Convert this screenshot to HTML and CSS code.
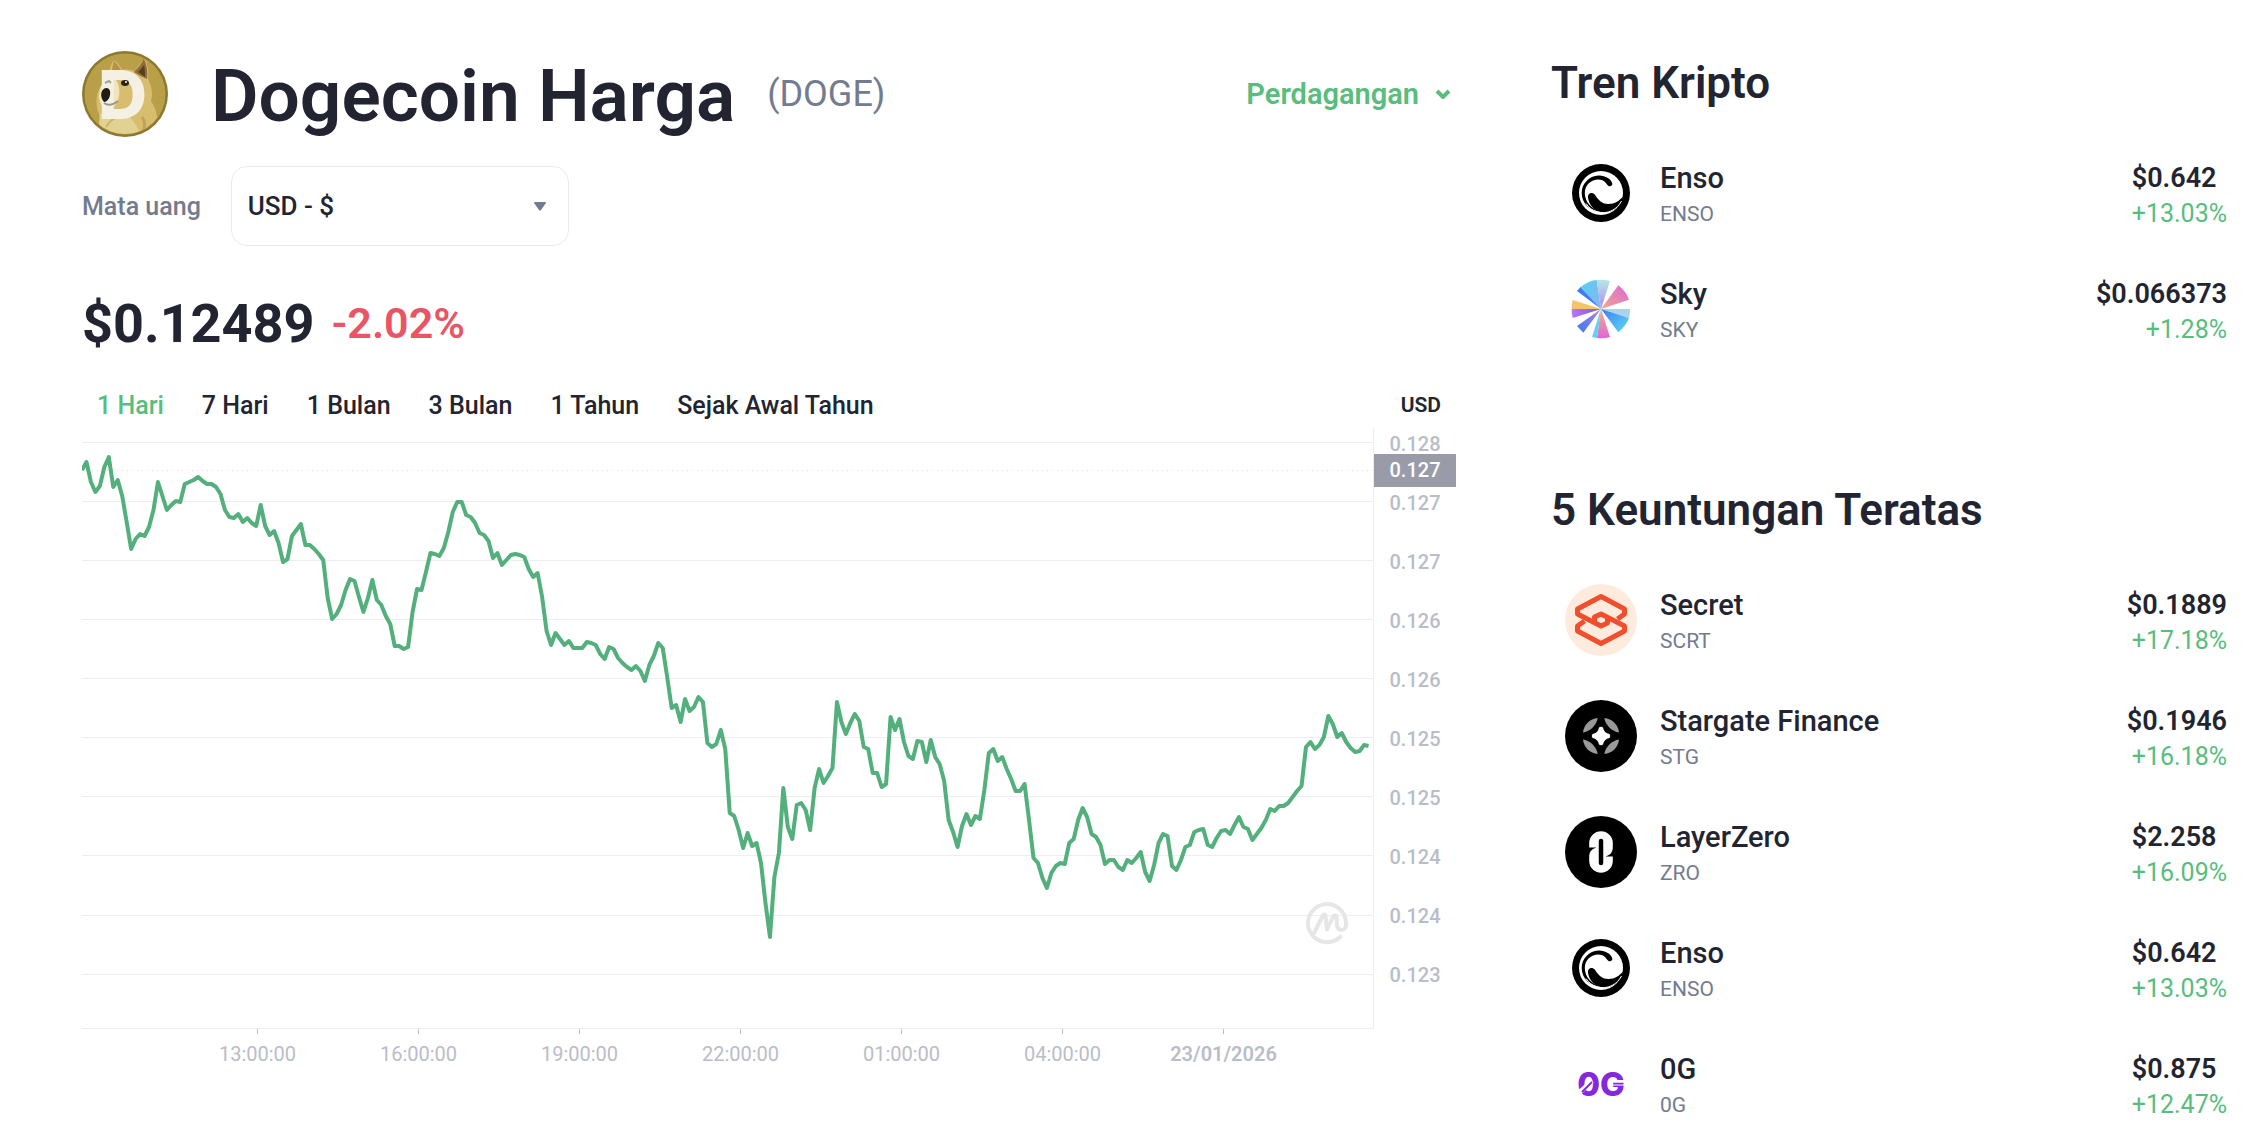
FILE: index.html
```html
<!DOCTYPE html>
<html lang="id">

<head>
  <meta charset="UTF-8" />
  <meta name="viewport" content="width=device-width, initial-scale=1" />
  <title>Dogecoin Harga (DOGE)</title>
  <link rel="stylesheet" href="styles.css">
</head>

<body>
  <!-- shared gradients and the Enso mark, used twice -->
  <svg class="defs" aria-hidden="true">
    <defs>
      <linearGradient id="skyPale" x1="0" y1="0" x2="0" y2="1">
        <stop offset="0" stop-color="#b9e6e6" />
        <stop offset="1" stop-color="#a98bf0" />
      </linearGradient>
      <linearGradient id="skyCyan" x1="0" y1="0" x2="1" y2="1">
        <stop offset="0" stop-color="#53d3f3" />
        <stop offset="1" stop-color="#8fb0f5" />
      </linearGradient>
      <linearGradient id="skyPink" x1="1" y1="0" x2="0" y2="1">
        <stop offset="0" stop-color="#dd66d8" />
        <stop offset="1" stop-color="#f0a98c" />
      </linearGradient>
      <linearGradient id="skyRose" x1="0" y1="1" x2="0" y2="0">
        <stop offset="0" stop-color="#dd66d8" />
        <stop offset="1" stop-color="#f3b183" />
      </linearGradient>
      <linearGradient id="skyBlue" x1="0" y1="0" x2="1" y2="1">
        <stop offset="0" stop-color="#3f7cf0" />
        <stop offset="1" stop-color="#5cdcf5" />
      </linearGradient>
      <linearGradient id="skyPurple" x1="0" y1="0" x2="1" y2="0">
        <stop offset="0" stop-color="#b878f0" />
        <stop offset="1" stop-color="#8055e0" />
      </linearGradient>
      <linearGradient id="skyDeep" x1="0" y1="1" x2="1" y2="0">
        <stop offset="0" stop-color="#3a7bf2" />
        <stop offset="1" stop-color="#b07fe8" />
      </linearGradient>
      <clipPath id="dogeClip">
        <circle cx="43" cy="43" r="40" />
      </clipPath>
    </defs>
    <symbol id="enso" viewBox="0 0 72 72">
      <circle cx="36" cy="36" r="29" />
      <circle cx="36" cy="36" r="22" fill="#fff" />
      <path d="M47.3 26.5C46.5 22 40 18.2 33.5 18.5 24 19 16.7 26.5 16.7 36c0 10.500 8.300 18.500 19.300 18.500C27 53 19.800 45 19.800 36c0-8 6.200-13.600 13.700-13.600 4.500 0 7.500 3.100 9 5.600 1.500 2.200 5.200 1.200 4.800-1.500z" />
      <path d="M23 40.500c-.6-4.200 4-6.200 6.700-3C33 42 36 47 43.500 47c6.500 0 11-3.500 14.500-7.500C57 50 47.500 56 38 55.500 29 54.500 23.800 47.500 23 40.500z" />
      <path d="M21 46.500C26 54.500 37 58.500 47 53.500c4-2 7.500-5.500 9.500-9.500" fill="none" stroke="#fff" stroke-width="1" />
    </symbol>
  </svg>

  <div class="page">
    <main class="coin">
      <header class="coin-header">
        <svg class="coin-logo" viewBox="0 0 86 86" role="img" aria-label="Dogecoin">
          <circle cx="43" cy="43" r="43" fill="#8c7930" />
          <circle cx="43" cy="43" r="40.500" fill="#b9a048" />
          <g clip-path="url(#dogeClip)">
            <path d="M16 80c2-6 3-11 1-17-4-9-3-21 2-28 3-5 6-8 8-12 1-6 2-11 5-14 4 3 7 7 8 10 5-1 9 0 13 1 3-5 7-10 10-12 3 6 4 13 3 20 4 8 5 16 3 22 6 9 8 20 5 30z" fill="#d8bd6e" />
            <path d="M17 47c0-9 3-15 8-20 5-3 9 1 11 6 3 9 1 18-5 24-6 4-12 0-14-10z" fill="#f0e3bd" />
            <path d="M52 21c4-4 7-8 10-13 3 6 4 13 3 20-4-2-9-4-13-7z" fill="#8f6d3a" />
            <path d="M56 21c2-2 4-4 6-7 1 4 1 8 1 12z" fill="#54411f" />
            <path d="M30 21c0-4 1-8 2-11 3 3 5 6 7 9z" fill="#b98f4a" />
            <path d="M18 62c8 6 20 8 30 4 6 8 12 15 8 20H16z" fill="#e2d292" />
            <path d="M60 66c4 5 3 11 0 17" fill="none" stroke="#bfa55a" stroke-width="3" />
            <path d="M24 76c3-5 8-9 12-10" fill="none" stroke="#cbb368" stroke-width="2" />
          </g>
          <text class="doge-letter" x="16" y="68">D</text>
          <path d="M20 40c2-4 7-4 8 0 1 5-2 11-6 11-2-2-4-7-2-11z" fill="#211b16" />
          <path d="M22 52c4 3 9 2 14-2" fill="none" stroke="#9b948c" stroke-width="2" />
          <ellipse cx="43" cy="32" rx="4" ry="3" fill="#2b2216" />
          <circle cx="44" cy="31" r="1" fill="#fff" />
          <path d="M23 32l4-2 2 2" fill="none" stroke="#aaa49c" stroke-width="2" />
        </svg>
        <h1>Dogecoin Harga</h1>
        <span class="symbol">(DOGE)</span>
        <button type="button" class="trade">
          Perdagangan
          <svg class="chevron" viewBox="0 0 16 10" aria-hidden="true">
            <path d="M2 2l6 6 6-6" />
          </svg>
        </button>
      </header>

      <div class="currency">
        <label for="currency">Mata uang</label>
        <select id="currency">
          <option>USD - $</option>
        </select>
      </div>

      <div class="quote">
        <strong class="quote-price">$0.12489</strong>
        <span class="quote-change">-2.02%</span>
      </div>

      <div class="ranges">
        <button type="button" class="range active">1 Hari</button>
        <button type="button" class="range">7 Hari</button>
        <button type="button" class="range">1 Bulan</button>
        <button type="button" class="range">3 Bulan</button>
        <button type="button" class="range">1 Tahun</button>
        <button type="button" class="range">Sejak Awal Tahun</button>
        <span class="unit">USD</span>
      </div>

      <div class="chart">
        <div class="plot">
          <!-- one x unit per five minutes -->
          <svg class="plot-svg" viewBox="0 0 289 600" preserveAspectRatio="none" role="img" aria-label="Grafik harga DOGE 1 hari">
            <path class="grid" d="M0 14.500H289M0 73.500H289M0 132.500H289M0 191.500H289M0 250.500H289M0 309.500H289M0 368.500H289M0 427.500H289M0 487.500H289M0 546.500H289" />
            <path class="open-line" d="M0 42.500H289" />
            <polyline class="price-line" points="0,42 1,34 2,54 3,64 4,58 5,39 6,29 7,59 8,52 9,68 10,94 11,121 12,111 13,106 14,108 15,99 16,82 17,54 18,68 19,82 20,77 21,73 22,74 23,56 24,54 25,52 26,49 27,53 28,56 29,56 30,59 31,66 32,82 33,89 34,90 35,86 36,94 37,90 38,95 39,98 40,77 41,98 42,107 43,103 44,115 45,134 46,131 47,108 48,102 49,96 50,117 51,117 52,121 53,126 54,132 55,170 56,191 57,186 58,177 59,162 60,151 61,153 62,169 63,184 64,170 65,152 66,172 67,177 68,188 69,196 70,218 71,218 72,221 73,219 74,184 75,161 76,162 77,144 78,125 79,126 80,128 81,120 82,104 83,84 84,74 85,74 86,87 87,89 88,95 89,105 90,107 91,113 92,130 93,125 94,137 95,132 96,127 97,126 98,127 99,129 100,141 101,149 102,145 103,169 104,203 105,217 106,205 107,211 108,217 109,213 110,220 111,220 112,220 113,214 114,215 115,217 116,226 117,231 118,219 119,221 120,230 121,235 122,239 123,242 124,238 125,243 126,253 127,237 128,228 129,215 130,220 131,249 132,280 133,277 134,294 135,271 136,283 137,279 138,269 139,274 140,315 141,319 142,316 143,302 144,321 145,385 146,388 147,402 148,420 149,405 150,418 151,415 152,435 153,475 154,509 155,449 156,425 157,360 158,399 159,411 160,377 161,375 162,382 163,402 164,360 165,341 166,355 167,348 168,340 169,274 170,294 171,306 172,295 173,286 174,293 175,319 176,321 177,345 178,345 179,359 180,356 181,289 182,302 183,291 184,314 185,328 186,331 187,313 188,314 189,334 190,312 191,329 192,336 193,353 194,392 195,404 196,419 197,398 198,386 199,397 200,388 201,391 202,362 203,325 204,321 205,333 206,329 207,341 208,351 209,363 210,363 211,356 212,392 213,430 214,435 215,450 216,460 217,445 218,438 219,435 220,436 221,415 222,411 223,392 224,380 225,389 226,406 227,409 228,417 229,436 230,432 231,432 232,439 233,442 234,432 235,435 236,430 237,424 238,444 239,453 240,437 241,415 242,406 243,408 244,438 245,442 246,432 247,419 248,417 249,404 250,402 251,401 252,417 253,419 254,410 255,403 256,402 257,406 258,397 259,389 260,399 261,401 262,412 263,406 264,400 265,392 266,381 267,383 268,378 269,378 270,375 271,369 272,363 273,358 274,319 275,314 276,321 277,317 278,309 279,288 280,296 281,309 282,305 283,314 284,320 285,324 286,323 287,317 288,318" />
          </svg>
          <svg class="watermark" viewBox="0 0 42 42" aria-hidden="true">
            <path d="M34.500 34.500A19 19 0 1 1 40 21v2c0 6.500-8.500 6.500-9 .5l-.5-8c-.3-3.200-2.200-2.800-3.500-.5L21 27.500 19.500 14c-.3-2-1.800-2-2.700-.3L7.500 32" />
          </svg>
        </div>
        <div class="y-axis">
          <span>0.128</span>
          <span>0.127</span>
          <span>0.127</span>
          <span>0.126</span>
          <span>0.126</span>
          <span>0.125</span>
          <span>0.125</span>
          <span>0.124</span>
          <span>0.124</span>
          <span>0.123</span>
          <span class="open-flag">0.127</span>
        </div>
        <div class="x-axis">
          <span>13:00:00</span>
          <span>16:00:00</span>
          <span>19:00:00</span>
          <span>22:00:00</span>
          <span>01:00:00</span>
          <span>04:00:00</span>
          <span class="date">23/01/2026</span>
        </div>
      </div>
    </main>

    <aside class="lists">
      <section>
        <h2>Tren Kripto</h2>
        <ul class="coins">
          <li>
            <a class="coin-row" href="#enso">
              <svg class="coin-icon" aria-hidden="true"><use href="#enso" /></svg>
              <span class="coin-name"><b>Enso</b><small>ENSO</small></span>
              <span class="coin-price"><b>$0.642</b><small>+13.03%</small></span>
            </a>
          </li>
          <li>
            <a class="coin-row" href="#sky">
              <svg class="coin-icon" viewBox="0 0 72 72" aria-hidden="true">
                <path d="M36 36L12 18l4-4.500z" fill="#3f7cf0" />
                <path d="M36 36L15.500 14.500Q22 8 31.700 7z" fill="url(#skyCyan)" />
                <path d="M36 36L31.700 7Q38 6 45 8z" fill="url(#skyPale)" />
                <path d="M36 36L53.300 12.300Q61 18 64 26.700z" fill="url(#skyPink)" />
                <path d="M36 36H65Q65 41 64 45z" fill="#a9d5ea" />
                <path d="M36 36L64 45Q61 53 53.300 59.300z" fill="url(#skyBlue)" />
                <path d="M36 36L45 64Q39 66 32 65z" fill="url(#skyRose)" />
                <path d="M36 36L32 65 27 64z" fill="#62d0f0" />
                <path d="M36 36L18.300 59.700 12 53z" fill="url(#skyDeep)" />
                <path d="M36 36L7.700 45Q6.500 40 6.700 36z" fill="url(#skyPurple)" />
                <path d="M36 36H6.700Q6.500 31 7.700 27z" fill="#f5c468" />
              </svg>
              <span class="coin-name"><b>Sky</b><small>SKY</small></span>
              <span class="coin-price"><b>$0.066373</b><small>+1.28%</small></span>
            </a>
          </li>
        </ul>
      </section>

      <section>
        <h2>5 Keuntungan Teratas</h2>
        <ul class="coins">
          <li>
            <a class="coin-row" href="#secret">
              <svg class="coin-icon" viewBox="0 0 72 72" aria-hidden="true">
                <circle cx="36" cy="36" r="36" fill="#fdecdd" />
                <g fill="none" stroke="#f04e2c" stroke-width="5" stroke-linejoin="round">
                  <path d="M52.500 35L59.500 30V25L36 12.500 12.500 25V30L36 42l6.500-3V35" />
                  <path d="M19.500 37L12.500 42V47L36 59.500 59.500 47V42L36 30l-6.500 3V37" />
                </g>
              </svg>
              <span class="coin-name"><b>Secret</b><small>SCRT</small></span>
              <span class="coin-price"><b>$0.1889</b><small>+17.18%</small></span>
            </a>
          </li>
          <li>
            <a class="coin-row" href="#stargate">
              <svg class="coin-icon" viewBox="0 0 72 72" aria-hidden="true">
                <circle cx="36" cy="36" r="36" />
                <g fill="#999">
                  <path d="M32.700 18C25 18.500 18.500 25 18 32.500 25 31.500 31.500 25.500 32.700 18z" />
                  <path d="M39.300 18C47 18.500 53.500 25 54 32.500 47 31.500 40.500 25.500 39.300 18z" />
                  <path d="M32.700 54C25 53.500 18.500 47 18 39.500 25 40.500 31.500 46.500 32.700 54z" />
                  <path d="M39.300 54C47 53.500 53.500 47 54 39.500 47 40.500 40.500 46.500 39.300 54z" />
                </g>
                <path d="M34 27.500q2-1.500 4 0 1 5.500 6.500 6.500 1.500 2 0 4-5.500 1-6.500 6.500-2 1.500-4 0-1-5.500-6.500-6.500-1.500-2 0-4 5.500-1 6.500-6.500z" fill="#fff" />
              </svg>
              <span class="coin-name"><b>Stargate Finance</b><small>STG</small></span>
              <span class="coin-price"><b>$0.1946</b><small>+16.18%</small></span>
            </a>
          </li>
          <li>
            <a class="coin-row" href="#layerzero">
              <svg class="coin-icon" viewBox="0 0 72 72" aria-hidden="true">
                <circle cx="36" cy="36" r="36" />
                <g fill="#fff">
                  <path d="M24.200 31.500V27a11.800 11.800 0 0 1 23.600 0v4c0 5.500-3 8.500-7.500 9.500H31v-9z" />
                  <path d="M47.800 40.500V45a11.800 11.800 0 0 1-23.600 0v-4c0-5.500 3-8.500 7.500-9.500H41v9z" />
                </g>
                <path d="M36 25v22" fill="none" stroke="#000" stroke-width="4.500" stroke-linecap="round" />
              </svg>
              <span class="coin-name"><b>LayerZero</b><small>ZRO</small></span>
              <span class="coin-price"><b>$2.258</b><small>+16.09%</small></span>
            </a>
          </li>
          <li>
            <a class="coin-row" href="#enso">
              <svg class="coin-icon" aria-hidden="true"><use href="#enso" /></svg>
              <span class="coin-name"><b>Enso</b><small>ENSO</small></span>
              <span class="coin-price"><b>$0.642</b><small>+13.03%</small></span>
            </a>
          </li>
          <li>
            <a class="coin-row" href="#0g">
              <svg class="coin-icon" viewBox="0 0 72 72" aria-hidden="true">
                <text class="zero-g" x="36" y="48">0G</text>
                <path d="M14 45L27 33" fill="none" stroke="#fff" stroke-width="5" />
                <path d="M17 44L27 34" fill="none" stroke="#8528dc" stroke-width="2" />
                <path d="M45 37H60" fill="none" stroke="#fff" stroke-width="1" />
              </svg>
              <span class="coin-name"><b>0G</b><small>0G</small></span>
              <span class="coin-price"><b>$0.875</b><small>+12.47%</small></span>
            </a>
          </li>
        </ul>
      </section>
    </aside>
  </div>
</body>

</html>
```
FILE: styles.css
```css
:root {
  --text: #222531;
  --muted: #737b8e;
  --axis: #b9bdc8;
  --line: #eceef0;
  --green: #58bd7d;
  --red: #e95565;
}

* {
  margin: 0;
  padding: 0;
  box-sizing: border-box;
}

body {
  background: #fff;
  color: var(--text);
  font-family: Roboto, sans-serif;
}

button,
select {
  font: inherit;
  color: inherit;
  background: none;
  border: none;
  cursor: pointer;
}

.defs {
  position: absolute;
  width: 0;
  height: 0;
}

.page {
  display: grid;
  grid-template-columns: 1374fr 676fr;
  gap: 95px;
  padding: 51px 19px 0 82px;
}

/* Header */
.coin-header {
  display: flex;
  align-items: center;
  height: 86px;
}

.coin-logo {
  width: 86px;
  height: 86px;
  margin-right: 43px;
}

.doge-letter {
  font-family: Inter, sans-serif;
  font-size: 68px;
  font-weight: 800;
  fill: #f5f0e4;
}

h1 {
  padding-top: 4px;
  font-size: 73px;
  font-weight: 600;
  line-height: 86px;
}

.symbol {
  margin-left: 32px;
  font-size: 36px;
  color: var(--muted);
}

.trade {
  display: flex;
  align-items: center;
  gap: 16px;
  margin-left: auto;
  padding-right: 5px;
  font-size: 29px;
  font-weight: 600;
  color: var(--green);
}

.chevron {
  width: 16px;
  height: 10px;
  fill: none;
  stroke: currentColor;
  stroke-width: 4;
}

/* Currency and price */
.currency {
  display: flex;
  align-items: center;
  gap: 30px;
  margin-top: 29px;
}

.currency label {
  font-size: 25px;
  font-weight: 500;
  color: var(--muted);
}

.currency select {
  width: 338px;
  height: 80px;
  padding: 0 16px;
  border: 1px solid #e9ebee;
  border-radius: 16px;
  font-size: 26px;
  font-weight: 500;
  appearance: none;
  background: url("data:image/svg+xml,%3Csvg xmlns='http://www.w3.org/2000/svg' viewBox='0 0 12 9'%3E%3Cpath d='M0 1q0-1 1-1h10q1 0 1 1L7 8q-1 1-2 0z' fill='%23737b8e'/%3E%3C/svg%3E") no-repeat right 22px center / 12px 9px;
}

.quote {
  display: flex;
  align-items: center;
  gap: 17px;
  height: 64px;
  margin-top: 45px;
}

.quote-price {
  font-size: 54px;
  font-weight: 700;
}

.quote-change {
  font-size: 43px;
  font-weight: 600;
  color: var(--red);
}

/* Chart */
.ranges {
  display: flex;
  align-items: center;
  gap: 38px;
  height: 44px;
  margin-top: 28px;
  padding: 0 15px;
}

.range {
  font-size: 25px;
  font-weight: 500;
}

.range.active {
  color: var(--green);
}

.unit {
  margin-left: auto;
  font-size: 21px;
  font-weight: 600;
}

.chart {
  display: grid;
  grid-template-columns: 1fr 82px;
  margin-top: 1px;
}

.plot {
  position: relative;
  border-right: 1px solid var(--line);
  border-bottom: 1px solid var(--line);
}

.plot-svg {
  display: block;
  width: 100%;
  height: 600px;
}

.plot-svg * {
  fill: none;
  vector-effect: non-scaling-stroke;
}

.grid {
  stroke: var(--line);
}

.open-line {
  stroke: #dcdee3;
  stroke-dasharray: 1 4;
}

.price-line {
  stroke: #53b07c;
  stroke-width: 4;
  stroke-linejoin: round;
}

.watermark {
  position: absolute;
  right: 25px;
  bottom: 84px;
  width: 42px;
  height: 42px;
  fill: none;
  stroke: #e6e6e6;
  stroke-width: 4;
  stroke-linecap: round;
  stroke-linejoin: round;
  overflow: visible;
}

.y-axis {
  position: relative;
  text-align: center;
  font-size: 20px;
  font-weight: 500;
  line-height: 33px;
  color: var(--axis);
}

.y-axis span {
  display: block;
  margin-bottom: 26px;
}

/* sits over the scale at the opening price */
.y-axis .open-flag {
  position: absolute;
  top: 26px;
  left: 0;
  width: 100%;
  background: #999ca8;
  color: #fff;
}

/* outer columns keep the ticks under the three-hour marks */
.x-axis {
  display: grid;
  grid-template-columns: 95fr repeat(7, 161fr) 70fr;
  text-align: center;
  font-size: 20px;
  line-height: 40px;
  color: var(--axis);
}

.x-axis span:first-child {
  grid-column: 2;
}

.x-axis span::before {
  content: "";
  display: block;
  width: 1px;
  height: 5px;
  margin: 0 auto;
  background: var(--axis);
}

.x-axis .date {
  font-weight: 600;
}

/* Coin lists */
h2 {
  margin-bottom: 24px;
  font-size: 44px;
  font-weight: 600;
  line-height: 56px;
}

.lists {
  padding-top: 4px;
}

.lists section + section {
  margin-top: 116px;
}

.coins {
  list-style: none;
}

.coin-row {
  display: flex;
  align-items: center;
  height: 116px;
  padding-left: 14px;
  color: inherit;
  text-decoration: none;
}

.coins li:last-child .coin-row {
  height: 115px;
}

.coin-icon {
  width: 72px;
  height: 72px;
  margin-right: 23px;
}

.coin-name,
.coin-price {
  display: flex;
  flex-direction: column;
  padding-top: 6px;
  line-height: 36px;
}

.coin-name b {
  font-size: 29px;
  font-weight: 500;
}

.coin-name small {
  font-size: 21px;
  color: var(--muted);
}

.coin-price {
  margin-left: auto;
}

.coin-price b {
  font-size: 27px;
  font-weight: 600;
}

.coin-price small {
  align-self: flex-end;
  font-size: 25px;
  color: var(--green);
}

.zero-g {
  font-family: Inter, sans-serif;
  font-size: 33px;
  font-weight: 800;
  text-anchor: middle;
  fill: #8528dc;
}
```
